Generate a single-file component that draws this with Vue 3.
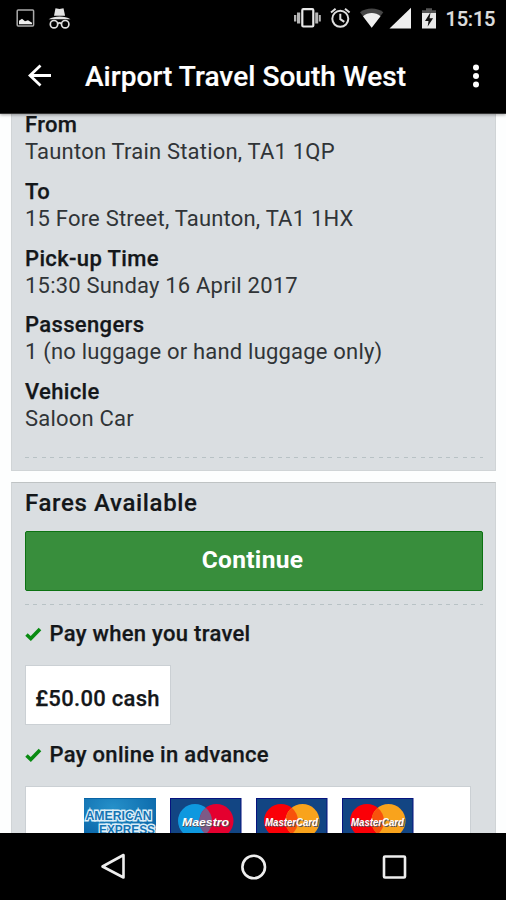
<script setup>
const details = [
  { label: 'From', value: 'Taunton Train Station, TA1 1QP' },
  { label: 'To', value: '15 Fore Street, Taunton, TA1 1HX' },
  { label: 'Pick-up Time', value: '15:30 Sunday 16 April 2017' },
  { label: 'Passengers', value: '1 (no luggage or hand luggage only)' },
  { label: 'Vehicle', value: 'Saloon Car' },
]
const cards = [
  { name: 'Maestro', left: '#0e98df', right: '#e4002f', mix: '#7d5a86' },
  { name: 'MasterCard', left: '#fb0007', right: '#f9a31c', mix: '#f8520c' },
  { name: 'MasterCard', left: '#fb0007', right: '#f9a31c', mix: '#f8520c' },
]
</script>

<template>
  <div class="screen">
    <header class="top">
      <div class="status">
        <svg class="left-icons" width="56" height="24" viewBox="16 7 56 24">
          <rect x="17.2" y="10" width="16.4" height="16" rx="1" fill="none" stroke="#aaa" stroke-width="1.5" />
          <path d="M19 24.3v-3.5l3-2 3 2.5 3-1 4 2.5v1.5z" fill="#eee" />
          <path d="M55.5 8.2l4 .9 4-.9 1.6 7.5H54z" fill="#e3e3e3" />
          <path d="M48.7 19.2c3-1.8 6.600-2.600 10.900-2.600s7.900.8 10.900 2.600z" fill="#e3e3e3" />
          <g fill="none" stroke="#dedede" stroke-width="1.7"><circle cx="54" cy="24.2" r="3.700" /><circle cx="65.200" cy="24.200" r="3.700" /><path d="M57.500 23.700q2.100-1.500 4.200 0" /></g>
        </svg>
        <svg class="right-icons" width="144" height="24" viewBox="293 7 144 24">
          <g fill="#b5b5b5"><rect x="294" y="15" width="2.300" height="6.500" /><rect x="297" y="12.500" width="3.200" height="11" /><rect x="315.200" y="12.500" width="3" height="11" /><rect x="318.800" y="15" width="2" height="6.500" /></g>
          <rect x="302.300" y="9.200" width="11" height="17.300" rx="1" fill="none" stroke="#e8e8e8" stroke-width="2.200" />
          <g fill="none" stroke="#dedede" stroke-width="2"><circle cx="340.300" cy="18.800" r="8" /><path d="M340.300 13.800v5.400l4 2.600M331 12.500l4.600-3.800M349.600 12.500l-4.600-3.800" /></g>
          <path d="M360 12.200C366.500 7.200 377 7.200 383.300 12.200L371.700 27.800z" fill="#464646" />
          <path d="M363 16.200C368 12 375.500 12 380.500 16.200L371.700 27.800z" fill="#efefef" />
          <path d="M389.500 28.500L411 7.800V28.500z" fill="#efefef" />
          <path d="M426 8.300h6v2h4v4h-14v-4h4z" fill="#555" />
          <path d="M422 13h14v15.500h-14z" fill="#e8e8e8" />
          <path d="M430.500 12.200l-5.500 8.800h3.500l-.8 5.500 5.400-8.300h-3.500z" fill="#111" />
        </svg>
        <span class="clock">15:15</span>
      </div>
      <div class="toolbar">
        <svg class="back" width="24" height="24" viewBox="0 0 24 24"><path d="M23 11.500H2.500M12.500 1.500L2 11.500l10.500 10" fill="none" stroke="#fff" stroke-width="2.800" /></svg>
        <h1>Airport Travel South West</h1>
        <svg class="more" width="8" height="26" viewBox="0 0 8 26" fill="#fff"><circle cx="4" cy="4.500" r="3" /><circle cx="4" cy="13" r="3" /><circle cx="4" cy="21.500" r="3" /></svg>
      </div>
    </header>

    <main>
      <section class="panel trip">
        <dl>
          <div v-for="d in details" :key="d.label" class="row">
            <dt>{{ d.label }}</dt>
            <dd>{{ d.value }}</dd>
          </div>
        </dl>
        <div class="dash"></div>
      </section>

      <section class="panel fares">
        <h2>Fares Available</h2>
        <button>Continue</button>
        <div class="dash"></div>
        <h3 class="first"><svg width="17" height="14" viewBox="0 0 17 14"><path d="M1.500 7.500l4.300 4L15 2" fill="none" stroke="#098b12" stroke-width="3.600" /></svg>Pay when you travel</h3>
        <div class="cash">£50.00 cash</div>
        <h3 class="second"><svg width="17" height="14" viewBox="0 0 17 14"><path d="M1.500 7.500l4.300 4L15 2" fill="none" stroke="#098b12" stroke-width="3.600" /></svg>Pay online in advance</h3>
        <div class="cards">
          <svg width="72" height="46" viewBox="0 0 72 46">
            <defs><radialGradient id="amex" cx=".4" cy=".2" r=".8"><stop offset="0" stop-color="#2590c9" /><stop offset="1" stop-color="#0761a5" /></radialGradient></defs>
            <rect width="72" height="46" fill="url(#amex)" /><path d="M0 .5h72" stroke="#0863a5" />
            <g font-family="Liberation Sans" font-weight="700" font-size="13" fill="#1474b4" stroke="#dceef8" stroke-width="2.800" paint-order="stroke">
              <text x="1.500" y="21.500" textLength="66" lengthAdjust="spacingAndGlyphs">AMERICAN</text>
              <text x="15" y="35.500" textLength="56" lengthAdjust="spacingAndGlyphs">EXPRESS</text>
            </g>
          </svg>
          <svg v-for="(c, i) in cards" :key="i" width="72" height="46" viewBox="0 0 72 46">
            <rect x=".5" y=".5" width="70.500" height="46" fill="#124583" stroke="#06137e" />
            <circle cx="25" cy="23" r="17" :fill="c.left" /><circle cx="46.500" cy="23" r="17" :fill="c.right" />
            <path d="M35.750 9.800A17 17 0 0 1 35.750 36.200A17 17 0 0 1 35.750 9.800" :fill="c.mix" />
            <g font-family="Liberation Sans" font-weight="700" font-style="italic" font-size="11.500">
              <text :x="i ? 10 : 13" y="28.500" :textLength="i ? 53 : 47" lengthAdjust="spacingAndGlyphs" fill="#5b5560">{{ c.name }}</text>
              <text :x="i ? 9 : 12" y="27.500" :textLength="i ? 53 : 47" lengthAdjust="spacingAndGlyphs" fill="#fff">{{ c.name }}</text>
            </g>
          </svg>
        </div>
      </section>
    </main>

    <nav>
      <svg width="506" height="67" viewBox="0 833 506 67" fill="none" stroke="#eee" stroke-width="2.600" stroke-linejoin="round">
        <path d="M123.500 855v22.500L102.500 866.500z" /><circle cx="253.700" cy="867" r="11.300" /><rect x="384" y="856.500" width="21" height="21" rx="1" />
      </svg>
    </nav>
  </div>
</template>

<style>
body { margin: 0; background: #fff; overflow: hidden; }
</style>
<style scoped>
* { box-sizing: border-box; }
.screen { width: 506px; height: 900px; display: flex; flex-direction: column; overflow: hidden; font-family: Roboto, sans-serif; color: #14171a; background: #fdfefe; }
.top { flex: 0 0 114px; background: #000; color: #fff; border-bottom: 1px solid #333; z-index: 1; box-shadow: 0 1px 3px rgba(0, 0, 0, .35); }
.status { height: 38px; display: flex; align-items: flex-start; padding: 7px 0 0 16px; }
.right-icons { margin-left: 221px; }
.clock { margin-left: 8.500px; font-size: 20px; line-height: 25px; font-weight: 500; color: #ddd; letter-spacing: -.2px; -webkit-text-stroke: .2px; white-space: nowrap; }
.toolbar { height: 75px; display: flex; align-items: center; padding: 1px 26px 0 28px; }
h1 { margin: 2px 0 0 33px; font-size: 28px; line-height: 34px; font-weight: 500; letter-spacing: .05px; -webkit-text-stroke: .2px; white-space: nowrap; }
.more { margin-left: auto; }
main { flex: 0 0 719px; overflow: hidden; padding: 0 10px 0 11px; display: flex; flex-direction: column; gap: 11px; }
.panel { background: #dadee1; border: 1px solid #d0d4d6; padding: 0 12px 0 13px; flex: none; }
.trip { height: 357px; border-top: 0; }
dl { margin: 0; height: 343px; }
.row { height: 66.800px; transform: translateY(-3px); }
dt { font-size: 22px; line-height: 27px; font-weight: 500; letter-spacing: .35px; -webkit-text-stroke: .25px; }
dd { margin: 0; font-size: 22px; line-height: 27px; letter-spacing: .2px; color: #303437; white-space: nowrap; }
.dash { height: 1px; background: repeating-linear-gradient(90deg, #b8c2c5 0 4px, transparent 4px 8.420px); }
.fares { height: 400px; border-top-color: #bfc3c4; }
h2 { margin: 0; height: 48px; padding-top: 4px; font-size: 24px; line-height: 32px; font-weight: 500; letter-spacing: .65px; -webkit-text-stroke: .2px; }
button { display: block; width: 458px; height: 60px; padding: 0 3px 4px 0; border: 1px solid #0c7212; border-radius: 2px; background: #388e3c; color: #fff; font: 700 24.500px Roboto, sans-serif; letter-spacing: .3px; }
button + .dash { margin-top: 13px; }
h3 { margin: 0 0 0 -.5px; display: flex; align-items: center; gap: 8px; font-size: 22px; line-height: 30px; font-weight: 500; letter-spacing: .3px; -webkit-text-stroke: .25px; white-space: nowrap; }
.first { margin-top: 14px; }
.cash { width: 146px; height: 60px; margin: 16px 0 0 -.5px; border: 1px solid #cbd0d4; background: #fff; font-size: 22px; line-height: 65px; font-weight: 500; letter-spacing: .3px; -webkit-text-stroke: .25px; text-align: center; white-space: nowrap; }
.second { margin-top: 15px; }
.cards { margin: 16px 0 0 -.5px; width: 446px; height: 70px; background: #fff; border: 1px solid #cbd0d4; display: flex; gap: 14px; padding: 11px 0 0 58px; }
nav { flex: 0 0 67px; background: #000; }
nav svg { display: block; }
</style>
